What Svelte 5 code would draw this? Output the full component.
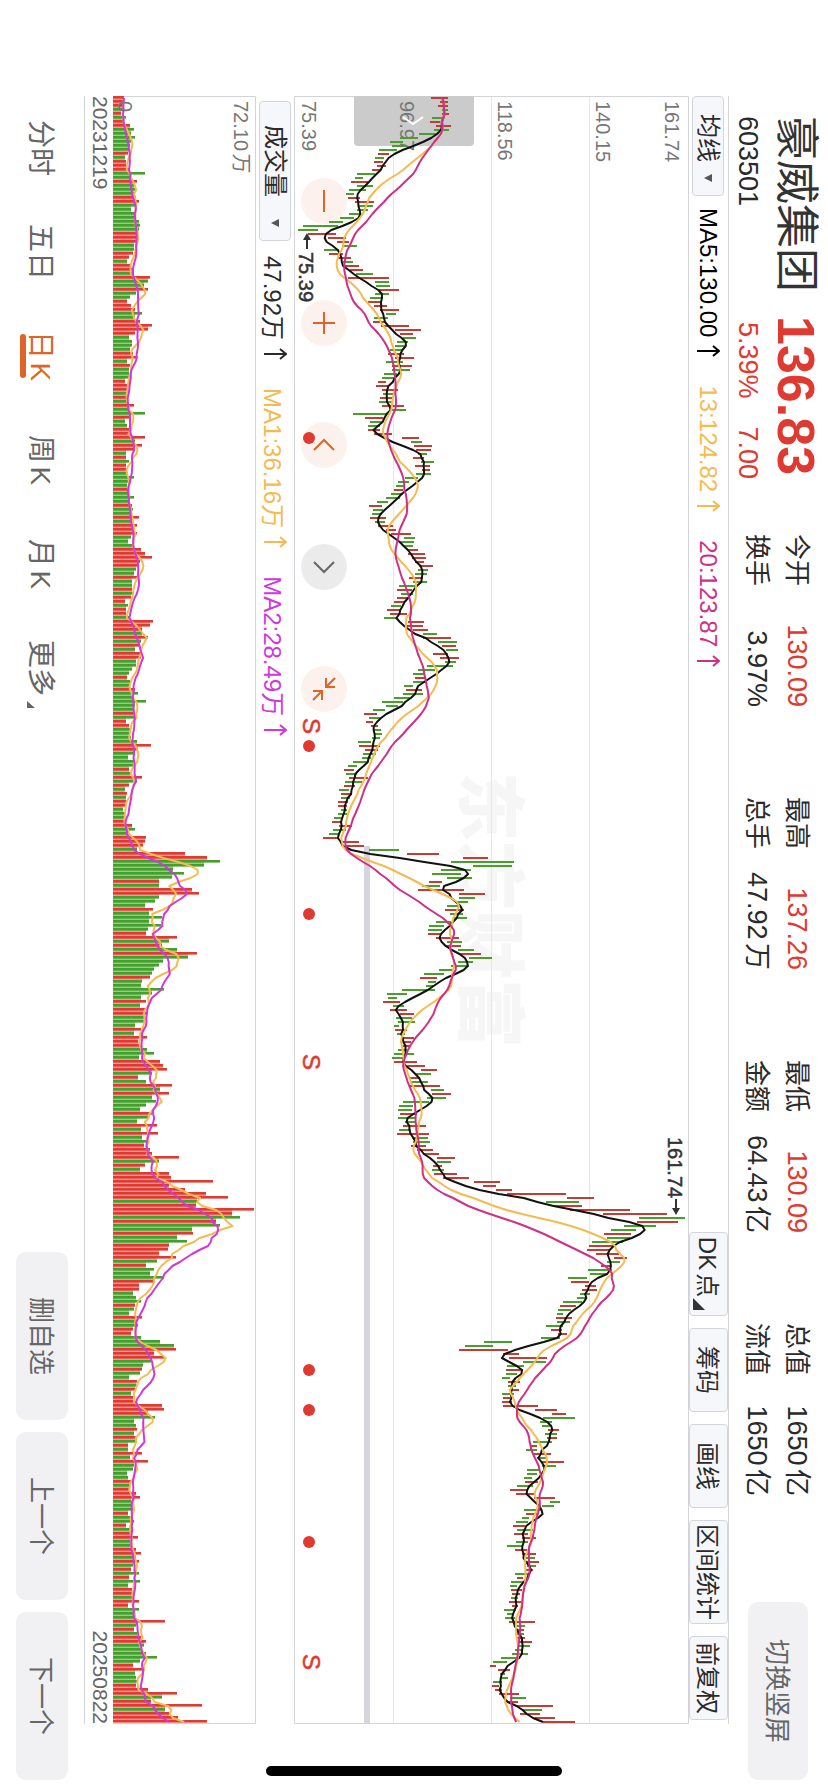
<script lang="ts">
    type Candle = {
        up: boolean;
        volume: number;
        low: number;
        high: number;
    };

    type Point = [number, number];

    // one entry per trading day: direction + volume : low - high (plot units above the axis)
    const series = `
        r11:137-154 r10:146-154 r10:144-154 g11:148-154 r8:148-155 g13:138-149 r11:136-146 r17:142-157 g21:140-155 g18:125-143
        g22:106-124 g18:96-109 g17:98-113 g16:85-103 r15:84-95 g12:81-90 r13:80-89 r13:83-92 r16:78-86 g32:63-81
        g17:61-69 r24:57-74 g21:63-79 g22:55-72 g21:52-60 r23:54-66 r26:61-80 g24:64-79 g18:63-74 g21:55-66
        g22:46-60 g26:35-49 g27:9-44 g26:4-24 r23:14-42 r24:34-52 r23:43-55 g21:48-63 g21:30-45 r20:35-49
        r16:43-57 g14:49-59 r17:51-65 r21:56-69 g21:62-79 r37:54-95 g35:81-95 g31:82-96 r35:85-105 g23:81-95
        g17:76-89 r14:74-86 r18:80-93 r22:86-105 g29:92-102 g22:80-94 r27:79-91 r39:87-115 r35:101-127 r22:106-119
        g16:109-122 g19:103-114 g19:101-111 g17:96-108 r20:94-110 r24:101-120 g14:92-109 r17:98-118 g16:98-116 g16:90-103
        g16:88-101 r12:84-92 r14:82-94 r14:88-104 g13:89-99 r15:86-98 g15:85-98 r21:88-110 g17:98-112 g32:59-94
        r17:71-89 g12:76-89 g14:74-86 r16:74-86 r18:80-98 r32:108-125 g22:117-128 r29:120-138 r21:122-137 g13:124-133
        r13:119-130 g16:127-140 r13:121-136 r13:128-136 g15:122-137 g21:111-124 g17:104-115 g14:102-111 r14:100-109 g15:97-109
        g21:92-106 g16:83-94 r19:75-88 g20:79-89 g17:78-88 r26:76-92 g18:81-91 r24:84-99 r21:92-102 r24:97-117
        g18:110-121 g15:107-120 g21:109-119 r28:113-124 r32:114-131 r39:118-132 r27:121-130 r26:125-139 g23:124-134 g21:121-133
        r24:115-129 g19:119-133 g19:105-121 r19:103-118 g20:107-119 r18:103-114 r12:100-111 g15:97-107 r13:93-106 r13:96-113
        g16:90-103 r40:114-130 r37:112-129 r29:119-134 g29:129-143 r35:129-157 g28:144-163 r26:148-162 g22:152-164 r27:139-154
        r28:146-165 g23:151-162 g23:133-159 g19:124-141 g16:119-130 r14:121-132 g17:119-133 g17:110-119 r22:112-128 g25:109-129
        g20:100-116 g33:88-109 g22:92-104 g21:79-91 r20:70-83 g21:75-86 r13:72-79 r16:77-84 g17:79-87 g17:80-88
        g18:78-86 g24:64-77 r38:65-86 r25:71-84 g22:69-82 g15:68-77 g21:59-74 g20:54-63 r16:50-60 g17:52-63
        r29:55-74 g24:51-68 r16:50-61 g12:45-55 r14:47-58 g13:47-56 r13:44-54 r12:44-53 g10:47-53 g12:44-53
        g11:40-49 r12:38-48 r19:45-58 g22:39-52 g16:35-44 r33:29-44 r32:48-65 r30:51-70 g24:75-105 r72:113-145
        r94:169-194 g107:157-220 g91:179-218 g60:147-177 g71:138-167 g59:153-178 r46:135-148 g46:128-146 r79:124-170 r86:165-191
        g46:165-181 g42:163-174 g32:153-164 r40:151-170 g36:156-169 g49:159-173 g36:142-157 g48:135-150 g35:134-148 r33:134-146
        r64:142-165 g56:153-168 r49:151-167 g64:164-180 r84:166-187 g75:175-198 g50:164-179 g46:157-175 g41:145-159 g39:130-150
        r37:126-143 g29:134-142 g28:132-140 g51:108-141 g39:93-113 g28:94-103 r33:89-106 g27:99-110 r32:96-113 r34:106-120
        g32:102-118 g31:104-121 g22:100-105 r28:101-113 g21:103-111 r34:108-120 r25:109-117 r27:108-116 g34:104-113 g41:100-120
        g26:98-111 r47:100-123 r50:110-131 r54:127-143 g39:121-137 r25:116-126 g33:117-134 r59:115-146 g47:137-150 r56:138-157
        g39:133-152 g43:109-135 g33:105-119 g27:104-118 r39:106-123 g36:104-122 g24:111-121 r44:109-132 g28:105-117 r45:103-135
        g29:118-134 g33:119-136 r31:117-132 r37:123-139 r39:129-145 r66:143-161 g46:143-157 r32:139-148 g27:138-150 r56:140-163
        r58:149-175 r100:180-206 r56:189-202 r72:202-218 r93:213-272 r115:273-300 g84:252-285 r83:259-288 r141:276-336 r119:309-373
        g127:345-391 r103:343-384 g107:330-362 g79:317-342 r80:310-337 g64:313-336 g74:298-329 r56:295-319 r55:293-316 r46:302-325
        r63:320-333 g44:313-326 r33:307-316 g41:294-318 g37:296-313 g51:274-293 r42:277-295 r26:291-302 r26:288-303 g20:286-296
        g23:283-293 g28:269-288 r22:266-282 g21:264-277 g16:263-269 r29:262-278 g22:263-276 g25:252-269 r20:257-268 r18:264-273
        g28:247-266 g47:190-218 g61:171-199 r63:165-214 r41:209-225 r51:215-253 g38:229-252 g30:213-230 r29:212-229 g27:212-223
        g16:208-216 r24:214-226 g23:214-222 r22:215-225 g18:208-220 r20:209-216 r21:208-218 r49:209-244 r51:241-263 r35:258-272
        g42:249-281 g21:246-258 g23:248-256 r24:254-265 g21:251-263 r24:253-263 g24:239-258 r15:236-243 g15:232-243 r29:240-257
        g17:243-253 r35:248-270 g21:248-262 g20:233-245 g14:233-243 g15:230-238 r18:231-244 g18:223-239 r16:216-233 r23:222-240
        r27:240-261 g18:256-266 g18:248-260 g20:230-248 r15:232-243 g17:228-235 g21:222-234 r13:219-231 g20:223-239 r17:220-234
        r25:228-242 g17:222-234 g17:213-229 r23:221-233 r28:228-242 g23:231-241 r26:231-245 g20:233-242 r18:232-239 g26:221-235
        r16:223-229 g27:217-231 g15:216-223 r19:217-228 r19:218-226 g20:217-224 r26:215-228 r15:218-224 g26:210-222 g22:213-219
        g22:211-221 r52:215-241 g23:223-231 r21:222-230 g24:223-230 r28:223-231 r33:224-238 g31:225-236 g29:221-229 g33:218-234
        g44:207-226 g27:199-213 r20:196-202 r32:204-216 g22:206-211 g23:207-214 g25:199-208 r23:198-205 r35:201-208 r64:205-225
        g49:216-232 r38:213-224 r89:223-259 g52:228-248 r56:226-246 r65:241-261 r94:249-281
    `;

    const candles: Candle[] = series.trim().split(/\s+/).map((entry) => {
        const [volume, range] = entry.slice(1).split(":");
        const [low, high] = range.split("-").map(Number);
        return { up: entry[0] === "r", volume: Number(volume), low, high };
    });

    const step = 4;
    const plotWidth = candles.length * step;
    const priceHeight = 395;
    const volumeHeight = 143;

    const closes = candles.map((c) => {
        const share = c.up ? 0.65 : 0.4;
        return c.low + (c.high - c.low) * share;
    });
    const volumes = candles.map((c) => c.volume);

    const average = (values: number[], days: number) =>
        values.map((_, i) => {
            const part = values.slice(Math.max(0, i - days + 1), i + 1);
            return part.reduce((sum, v) => sum + v, 0) / part.length;
        });

    const toLine = (values: number[], height: number) => {
        const points: Point[] = values.map((v, i) => [i * step + 2, height - v]);
        return points.map(([x, y]) => `${x},${y.toFixed(1)}`).join(" ");
    };

    const priceLines = [
        { name: "ma5", points: toLine(average(closes, 5), priceHeight) },
        { name: "ma13", points: toLine(average(closes, 13), priceHeight) },
        { name: "ma20", points: toLine(average(closes, 20), priceHeight) }
    ];

    const volumeLines = [
        { name: "vol5", points: toLine(average(volumes, 5), volumeHeight) },
        { name: "vol10", points: toLine(average(volumes, 10), volumeHeight) }
    ];

    // the gap between two bars is tinted up to the shorter of them
    const gaps = candles.slice(1).map((c, i) => Math.min(c.volume, candles[i].volume));

    const quotes = [
        { label: "今开", value: "130.09", red: true },
        { label: "最高", value: "137.26", red: true },
        { label: "最低", value: "130.09", red: true },
        { label: "总值", value: "1650亿", red: false },
        { label: "换手", value: "3.97%", red: false },
        { label: "总手", value: "47.92万", red: false },
        { label: "金额", value: "64.43亿", red: false },
        { label: "流值", value: "1650亿", red: false }
    ];

    const priceAverages = [
        { name: "ma5", text: "MA5:130.00" },
        { name: "ma13", text: "13:124.82" },
        { name: "ma20", text: "20:123.87" }
    ];

    const volumeAverages = [
        { name: "total", text: "47.92万" },
        { name: "vol5", text: "MA1:36.16万" },
        { name: "vol10", text: "MA2:28.49万" }
    ];

    const tools = ["DK点", "筹码", "画线", "区间统计", "前复权"];
    const periods = ["分时", "五日", "日K", "周K", "月K", "更多"];
    const actions = ["删自选", "上一个", "下一个"];

    const priceLabels = [
        { y: 24, text: "161.74" },
        { y: 93, text: "140.15" },
        { y: 191, text: "118.56" },
        { y: 289, text: "96.97" },
        { y: 387, text: "75.39" }
    ];

    const eventDots = [342, 650, 818, 1274, 1314, 1446];
    const eventMarks = [630, 966, 1566];

    const controls = [
        { label: "缩小", path: "M12 23H34", gray: false },
        { label: "放大", path: "M12 23H34M23 12V34", gray: false },
        { label: "左移", path: "M28 13L18 23L28 33", gray: false },
        { label: "右移", path: "M18 13L28 23L18 33", gray: true },
        { label: "收起", path: "M12 21H21V12M21 21L12 12M34 25H25V34M25 25L34 34", gray: false }
    ];

    let period = $state("日K");
</script>

<div class="device">
    <div class="screen">
        <header class="header">
            <div class="stock">
                <h1 class="name">豪威集团</h1>
                <span class="price">136.83</span>
                <span class="code">603501</span>
                <span class="change"><span>5.39%</span><span>7.00</span></span>
            </div>
            <dl class="quotes">
                {#each quotes as quote}
                    <div class="quote">
                        <dt>{quote.label}</dt>
                        <dd class:red={quote.red}>{quote.value}</dd>
                    </div>
                {/each}
            </dl>
            <button class="soft-button rotate">切换竖屏</button>
        </header>

        <main class="charts">
            <div class="toolbar">
                <button class="picker">均线<i class="caret"></i></button>
                {#each priceAverages as item}
                    <span class="average {item.name}">
                        {item.text}
                        <svg class="arrow" viewBox="0 0 12 24"><path d="M6 23V2M1 7L6 1L11 7" /></svg>
                    </span>
                {/each}
                <div class="tools">
                    {#each tools as tool, i}
                        <button class="tool" class:more={i === 0}>{tool}</button>
                    {/each}
                </div>
            </div>

            <div class="plot">
                <svg class="canvas" viewBox="0 0 {plotWidth} {priceHeight}">
                    <text class="watermark" x="676" y="224">东方财富</text>
                    <path class="grid" d="M0 99.5H{plotWidth}M0 197.5H{plotWidth}M0 295.5H{plotWidth}" />
                    <path class="frame" d="M0.5 394.5V0.5H{plotWidth - 0.5}V394.5Z" />
                    <path class="tab" d="M0 215H46Q50 215 50 219V331Q50 335 46 335H0Z" />
                    <rect class="scroll" x="750" y="319" width={plotWidth - 750} height="6" />
                    {#each priceLabels as label}
                        <text class="axis" x="5" y={label.y}>{label.text}</text>
                    {/each}
                    <path class="tab-icon" d="M21 266L28 276L21 286" />
                    {#each candles as c, i}
                        <rect
                            class={c.up ? "candle-up" : "candle-down"}
                            x={i * step + 1}
                            y={priceHeight - c.high}
                            width="2"
                            height={c.high - c.low}
                        />
                    {/each}
                    {#each priceLines as line}
                        <polyline class="line {line.name}" points={line.points} />
                    {/each}
                    <text class="note" x="156" y="390">75.39</text>
                    <path class="note-line" d="M153 382H141" />
                    <path class="note-head" d="M137 382L144 378V386Z" />
                    <text class="note" x="1041" y="21">161.74</text>
                    <path class="note-line" d="M1103 13H1115" />
                    <path class="note-head" d="M1119 13L1112 9V17Z" />
                    {#each eventMarks as x}
                        <text class="mark" {x} y="386">S</text>
                    {/each}
                </svg>
                <div class="controls">
                    {#each controls as control}
                        <button class="round" class:gray={control.gray} aria-label={control.label}>
                            <svg viewBox="0 0 46 46"><path d={control.path} /></svg>
                        </button>
                    {/each}
                </div>
                <svg class="canvas events" viewBox="0 0 {plotWidth} {priceHeight}">
                    {#each eventDots as x}
                        <circle cx={x} cy="380" r="6" />
                    {/each}
                </svg>
            </div>

            <div class="toolbar volume-bar">
                <button class="picker wide">成交量<i class="caret"></i></button>
                {#each volumeAverages as item}
                    <span class="average {item.name}">
                        {item.text}
                        <svg class="arrow" viewBox="0 0 12 24"><path d="M6 23V2M1 7L6 1L11 7" /></svg>
                    </span>
                {/each}
            </div>

            <svg class="canvas" viewBox="0 0 {plotWidth} {volumeHeight}">
                <path class="frame" d="M0.5 {volumeHeight}V0.5H{plotWidth - 0.5}V{volumeHeight}" />
                {#each gaps as gap, i}
                    <rect
                        class={candles[i].up ? "gap-up" : "gap-down"}
                        x={i * step + 2}
                        y={volumeHeight - gap}
                        width="3"
                        height={gap}
                    />
                {/each}
                {#each candles as c, i}
                    <rect
                        class={c.up ? "bar-up" : "bar-down"}
                        x={i * step}
                        y={volumeHeight - c.volume}
                        width="2.6"
                        height={c.volume}
                    />
                {/each}
                {#each volumeLines as line}
                    <polyline class="line {line.name}" points={line.points} />
                {/each}
                <text class="axis" x="5" y="22">72.10万</text>
                <text class="axis" x="5" y="138">0</text>
            </svg>

            <div class="dates">
                <time>20231219</time>
                <time>20250822</time>
            </div>
        </main>

        <footer class="footer">
            <nav class="periods">
                {#each periods as item}
                    <button
                        class="period"
                        class:active={period === item}
                        class:corner={item === "更多"}
                        onclick={() => (period = item)}
                    >
                        <span>{item}</span>
                    </button>
                {/each}
            </nav>
            <div class="actions">
                {#each actions as action}
                    <button class="soft-button">{action}</button>
                {/each}
            </div>
        </footer>

        <div class="home-indicator"></div>
    </div>
</div>

<style>
    :global(body) {
        background: #fff;
    }

    .device {
        width: 100vw;
        height: 100vh;
        overflow: hidden;
    }

    /* landscape layout inside a portrait window */
    .screen {
        position: relative;
        display: flex;
        flex-direction: column;
        width: 100vh;
        height: 100vw;
        transform-origin: 0 0;
        transform: translateX(100vw) rotate(90deg);
        background: #fff;
        color: #2a2a2a;
        font-family: "Liberation Sans", "Noto Sans CJK SC", sans-serif;
        text-autospace: normal;
    }

    button {
        margin: 0;
        padding: 0;
        border: 0;
        background: none;
        color: inherit;
        font: inherit;
        white-space: nowrap;
        cursor: pointer;
    }

    .header {
        display: flex;
        align-items: flex-start;
        height: 99px;
        padding: 0 12px 0 116px;
    }

    .stock {
        display: grid;
        grid-template-columns: 200px 1fr;
        width: 418px;
        padding-top: 4px;
    }

    .name {
        margin: 0;
        font-size: 44px;
        font-weight: 400;
        line-height: 56px;
        color: #333;
    }

    .price {
        font-size: 52px;
        font-weight: 700;
        line-height: 56px;
        color: #df3a31;
    }

    .code,
    .change {
        font-size: 27px;
        line-height: 40px;
    }

    .change {
        display: flex;
        gap: 28px;
        padding-left: 6px;
        color: #df3a31;
    }

    .quotes {
        display: grid;
        grid-template-columns: repeat(4, 173px);
        column-gap: 90px;
        margin: 0;
        padding-top: 11px;
    }

    .quote {
        display: flex;
        justify-content: space-between;
        font-size: 26px;
        line-height: 40px;
    }

    .quote dd {
        margin: 0;
        font-size: 27px;
    }

    .quote .red {
        color: #df3a31;
    }

    .soft-button {
        width: 168px;
        height: 52px;
        padding-bottom: 4px;
        border-radius: 10px;
        background: #f1f1f4;
        color: #666;
        font-size: 26px;
    }

    .rotate {
        width: 178px;
        height: 60px;
        margin: 20px 0 0 auto;
    }

    .charts {
        margin: 0 68px 0 96px;
        border-top: 1px solid #d3d3da;
        border-bottom: 1px solid #d3d3da;
    }

    .toolbar {
        display: flex;
        align-items: center;
        height: 39px;
        font-size: 24px;
    }

    .volume-bar {
        height: 38px;
        padding-left: 5px;
    }

    .picker {
        display: flex;
        align-items: center;
        justify-content: space-between;
        width: 100px;
        height: 32px;
        margin-right: 12px;
        padding: 0 13px 0 17px;
        box-sizing: border-box;
        border: 1px solid #d3d5dc;
        border-radius: 4px;
        background: #f6f7fa;
        font-size: 24px;
        line-height: 28px;
    }

    .picker.wide {
        width: 140px;
        margin-right: 15px;
        padding-left: 23px;
    }

    .caret {
        border: 4px solid transparent;
        border-top: 8px solid #555;
        border-bottom: 0;
    }

    .average {
        display: flex;
        align-items: center;
        gap: 8px;
        margin-right: 28px;
        white-space: nowrap;
        text-autospace: no-autospace;
    }

    .arrow {
        width: 12px;
        height: 24px;
        fill: none;
        stroke: currentColor;
        stroke-width: 2;
    }

    .average.ma5 {
        color: #000;
    }

    .average.ma13,
    .average.vol5 {
        color: #f5bb50;
    }

    .average.ma20 {
        color: #cf2f86;
    }

    .average.vol10 {
        color: #d038dc;
    }

    .tools {
        display: flex;
        gap: 12px;
        margin-left: auto;
        margin-right: 4px;
    }

    .tool {
        position: relative;
        min-width: 84px;
        height: 39px;
        padding: 0 3px 2px;
        border: 1px solid #d3d5dc;
        border-radius: 4px;
        background: #f6f7fa;
        font-size: 24px;
    }

    .tool.more {
        padding-right: 17px;
    }

    .tool.more::after {
        content: "";
        position: absolute;
        right: 5px;
        bottom: 3px;
        border-left: 12px solid transparent;
        border-bottom: 12px solid #333;
    }

    .plot {
        position: relative;
    }

    .canvas {
        display: block;
        width: 100%;
        height: auto;
    }

    .events {
        position: absolute;
        inset: 0;
        fill: #df3a31;
        pointer-events: none;
    }

    .frame {
        fill: none;
        stroke: #d3d3da;
    }

    .grid {
        stroke: #e6e6ee;
    }

    .tab {
        fill: #cbcbcb;
    }

    .tab-icon {
        fill: none;
        stroke: #fff;
        stroke-width: 2;
    }

    .scroll {
        fill: #d5d6dd;
    }

    .axis {
        fill: #777;
        font-size: 20px;
    }

    .watermark {
        fill: #f6f6f7;
        font-size: 69px;
        font-weight: 900;
    }

    .note {
        fill: #333;
        font-size: 20px;
        stroke: #333;
        stroke-width: 0.5;
    }

    .note-line {
        stroke: #333;
        stroke-width: 2;
    }

    .note-head {
        fill: #333;
    }

    .mark {
        fill: #df3a31;
        font-size: 24px;
        stroke: #df3a31;
        stroke-width: 0.5;
        text-anchor: middle;
    }

    .candle-up {
        fill: #c23d34;
    }

    .candle-down {
        fill: #4a9e2d;
    }

    .bar-up {
        fill: #e03a32;
    }

    .bar-down {
        fill: #459f2c;
    }

    .gap-up {
        fill: #ee9a95;
    }

    .gap-down {
        fill: #97cb8c;
    }

    .line {
        fill: none;
        stroke-width: 2;
        stroke-linejoin: round;
    }

    .line.ma5 {
        stroke: #111;
    }

    .line.ma13,
    .line.vol5 {
        stroke: #f5bb50;
    }

    .line.ma20 {
        stroke: #cf2f86;
    }

    .line.vol10 {
        stroke: #d038dc;
    }

    .controls {
        position: absolute;
        left: 82px;
        bottom: 7px;
        display: flex;
        gap: 76px;
    }

    .round {
        width: 46px;
        height: 46px;
        border-radius: 50%;
        background: rgba(224, 99, 42, 0.09);
    }

    .round svg {
        display: block;
        fill: none;
        stroke: #df6427;
        stroke-width: 2;
    }

    .round.gray {
        background: #ebebeb;
    }

    .round.gray svg {
        stroke: #666;
    }

    .dates {
        display: flex;
        justify-content: space-between;
        height: 28px;
        color: #666;
        font-size: 21px;
        line-height: 26px;
    }

    .footer {
        display: flex;
        flex: 1;
        align-items: center;
        justify-content: space-between;
        padding: 0 12px 0 96px;
    }

    .periods {
        display: grid;
        grid-template-columns: repeat(6, 104px);
    }

    .period {
        padding-top: 4px;
        color: #666;
        font-size: 28px;
        line-height: 44px;
    }

    .period span {
        position: relative;
        display: inline-block;
    }

    .period.active {
        color: #df6427;
    }

    .period.active span::after {
        content: "";
        position: absolute;
        left: 3px;
        right: 3px;
        bottom: 2px;
        height: 6px;
        border-radius: 3px;
        background: #df6427;
    }

    .period.corner span::after {
        content: "";
        position: absolute;
        right: -12px;
        bottom: 9px;
        border-left: 7px solid transparent;
        border-bottom: 8px solid #666;
    }

    .actions {
        display: flex;
        gap: 12px;
    }

    .home-indicator {
        position: absolute;
        top: 50%;
        right: 16px;
        width: 10px;
        height: 296px;
        margin-top: -148px;
        border-radius: 5px;
        background: #000;
    }
</style>
